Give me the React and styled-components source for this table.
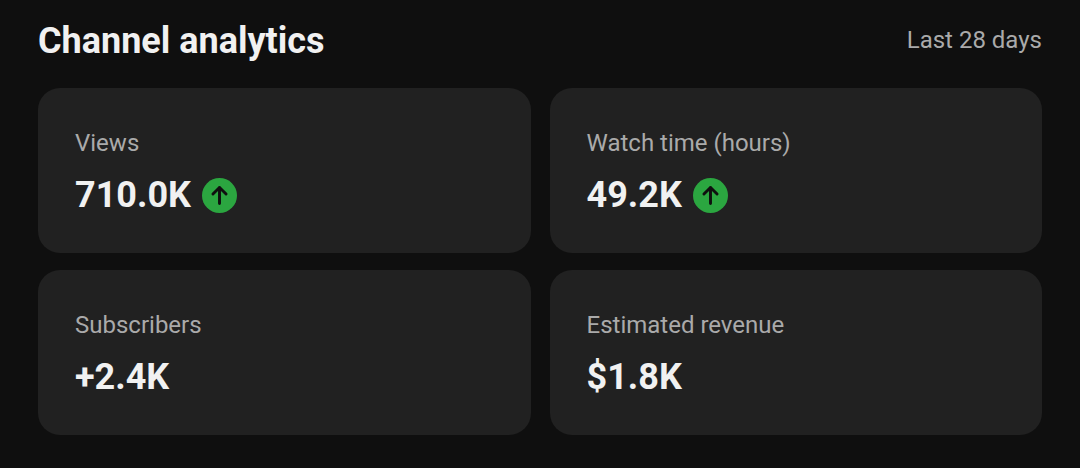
import React from 'react'
import styled, { createGlobalStyle } from 'styled-components'

const GlobalStyle = createGlobalStyle`
  body {
    margin: 0;
    background: #0f0f0f;
    font-family: Roboto, "Liberation Sans", sans-serif;
  }
`

const Page = styled.div`
  width: 1080px;
  height: 468px;
  box-sizing: border-box;
  padding: 20px 38px 0;
  background: #0f0f0f;
`

const Header = styled.div`
  height: 40px;
  margin-bottom: 28px;
  display: flex;
  align-items: center;
  justify-content: space-between;
`

const Title = styled.h1`
  margin: 0;
  font-size: 36px;
  line-height: 40px;
  font-weight: 700;
  color: #f1f1f1;
  position: relative;
  top: 1px;
`

const Period = styled.span`
  font-size: 24px;
  color: #aaaaaa;
`

const Grid = styled.div`
  display: grid;
  grid-template-columns: 1fr 1fr;
  grid-auto-rows: 165px;
  column-gap: 19px;
  row-gap: 17px;
`

const Card = styled.div`
  background: #212121;
  border-radius: 22px;
  padding: 42px 37px 0;
  display: flex;
  flex-direction: column;
  gap: 19px;
`

const Label = styled.div`
  font-size: 24px;
  line-height: 26px;
  color: #aaaaaa;
`

const ValueRow = styled.div`
  display: flex;
  align-items: center;
  gap: 11px;
`

const Value = styled.div`
  font-size: 36px;
  line-height: 40px;
  font-weight: 700;
  color: #f1f1f1;
`

const UpIcon = () => (
  <svg width="35" height="35" viewBox="0 0 24 24">
    <circle cx="12" cy="12" r="12" fill="#2ba640" />
    <path
      d="M12 17.5V6.5M7.5 11L12 6.5L16.5 11"
      fill="none"
      stroke="#0f0f0f"
      strokeWidth="2"
      strokeLinecap="round"
      strokeLinejoin="round"
    />
  </svg>
)

const stats = [
  { label: 'Views', value: '710.0K', up: true },
  { label: 'Watch time (hours)', value: '49.2K', up: true },
  { label: 'Subscribers', value: '+2.4K' },
  { label: 'Estimated revenue', value: '$1.8K' },
]

const App = () => {
  return (
    <Page>
      <GlobalStyle />
      <Header>
        <Title>Channel analytics</Title>
        <Period>Last 28 days</Period>
      </Header>
      <Grid>
        {stats.map((s) => (
          <Card key={s.label}>
            <Label>{s.label}</Label>
            <ValueRow>
              <Value>{s.value}</Value>
              {s.up && <UpIcon />}
            </ValueRow>
          </Card>
        ))}
      </Grid>
    </Page>
  )
}

export default App
